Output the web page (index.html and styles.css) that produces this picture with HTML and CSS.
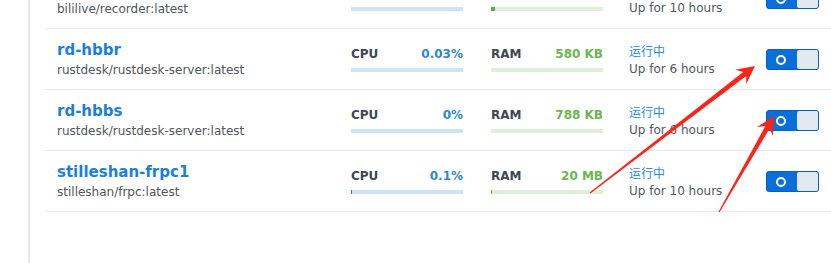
FILE: index.html
```html
<!DOCTYPE html>
<html lang="zh">
<head>
<meta charset="utf-8">
<title>Containers</title>
<link rel="stylesheet" href="styles.css">
</head>
<body>
<div class="page">
  <div class="panel">
    <div class="list">
      <div class="row">
        <div class="name">
          <div class="title">bililive-recorder</div>
          <div class="image">bililive/recorder:latest</div>
        </div>
        <div class="metric cpu">
          <div class="mhead"><span class="mlabel">CPU</span><span class="mval">0.2%</span></div>
          <div class="bar"><div class="fill" style="width:0px"></div></div>
        </div>
        <div class="metric ram">
          <div class="mhead"><span class="mlabel">RAM</span><span class="mval">120 MB</span></div>
          <div class="bar"><div class="fill" style="width:4px"></div></div>
        </div>
        <div class="status">
          <div class="state">运行中</div>
          <div class="uptime">Up for 10 hours</div>
        </div>
        <div class="toggle"><span class="ring"></span><span class="knob"></span></div>
      </div>
      <div class="row">
        <div class="name">
          <div class="title">rd-hbbr</div>
          <div class="image">rustdesk/rustdesk-server:latest</div>
        </div>
        <div class="metric cpu">
          <div class="mhead"><span class="mlabel">CPU</span><span class="mval">0.03%</span></div>
          <div class="bar"><div class="fill" style="width:0px"></div></div>
        </div>
        <div class="metric ram">
          <div class="mhead"><span class="mlabel">RAM</span><span class="mval">580 KB</span></div>
          <div class="bar"><div class="fill" style="width:0px"></div></div>
        </div>
        <div class="status">
          <div class="state">运行中</div>
          <div class="uptime">Up for 6 hours</div>
        </div>
        <div class="toggle"><span class="ring"></span><span class="knob"></span></div>
      </div>
      <div class="row">
        <div class="name">
          <div class="title">rd-hbbs</div>
          <div class="image">rustdesk/rustdesk-server:latest</div>
        </div>
        <div class="metric cpu">
          <div class="mhead"><span class="mlabel">CPU</span><span class="mval">0%</span></div>
          <div class="bar"><div class="fill" style="width:0px"></div></div>
        </div>
        <div class="metric ram">
          <div class="mhead"><span class="mlabel">RAM</span><span class="mval">788 KB</span></div>
          <div class="bar"><div class="fill" style="width:0px"></div></div>
        </div>
        <div class="status">
          <div class="state">运行中</div>
          <div class="uptime">Up for 6 hours</div>
        </div>
        <div class="toggle"><span class="ring"></span><span class="knob"></span></div>
      </div>
      <div class="row">
        <div class="name">
          <div class="title">stilleshan-frpc1</div>
          <div class="image">stilleshan/frpc:latest</div>
        </div>
        <div class="metric cpu">
          <div class="mhead"><span class="mlabel">CPU</span><span class="mval">0.1%</span></div>
          <div class="bar"><div class="fill" style="width:1px"></div></div>
        </div>
        <div class="metric ram">
          <div class="mhead"><span class="mlabel">RAM</span><span class="mval">20 MB</span></div>
          <div class="bar"><div class="fill" style="width:1px"></div></div>
        </div>
        <div class="status">
          <div class="state">运行中</div>
          <div class="uptime">Up for 10 hours</div>
        </div>
        <div class="toggle"><span class="ring"></span><span class="knob"></span></div>
      </div>
    </div>
  </div>
</div>
<svg class="marks" width="831" height="263" viewBox="0 0 831 263" aria-hidden="true">
  <polygon fill="#fb2418" points="590.4,193.5 746.2,75.9 746.2,84.0 755,66 735.2,69.8 743.2,71.9 589.6,192.5"/>
  <polygon fill="#fb2418" points="719.5,212.3 769.7,128.5 772.9,136.1 774,116 757.2,127.1 765.3,126.1 718.5,211.7"/>
</svg>
</body>
</html>
```
FILE: styles.css
```css
html, body {
  margin: 0;
  background: #ffffff;
}
body {
  width: 831px;
  height: 263px;
  overflow: hidden;
  position: relative;
  font-family: "DejaVu Sans", "Noto Sans CJK SC", sans-serif;
}
.page {
  display: flex;
  height: 263px;
  padding-left: 28px;
  box-sizing: border-box;
}
.panel {
  flex: 1;
  border-left: 2px solid #e8e8e8;
  padding-left: 15px;
  overflow: hidden;
}
.list {
  margin-top: -32px;
}
.row {
  display: flex;
  align-items: flex-start;
  height: 60px;
  border-bottom: 1px solid #e5e9ee;
  padding-left: 12px;
}
.name {
  width: 294px;
  flex: none;
  margin-top: 12px;
}
.title {
  font-size: 15px;
  font-weight: bold;
  line-height: 18px;
  color: #1b7fdb;
  white-space: nowrap;
}
.image {
  font-size: 12px;
  line-height: 16px;
  margin-top: 3px;
  color: #51565c;
  white-space: nowrap;
}
.metric {
  width: 112px;
  flex: none;
  margin-top: 17px;
}
.metric + .metric {
  margin-left: 28px;
}
.mhead {
  display: flex;
  justify-content: space-between;
  font-size: 12px;
  font-weight: bold;
  line-height: 16px;
}
.mlabel {
  color: #3e4752;
}
.cpu .mval {
  color: #2d88cd;
}
.ram .mval {
  color: #6ab650;
}
.bar {
  height: 4px;
  margin-top: 6px;
  display: flex;
}
.fill {
  height: 100%;
}
.cpu .bar {
  background: #cce4f7;
}
.cpu .fill {
  background: #2c7fc6;
}
.ram .bar {
  background: #dff0d9;
}
.ram .fill {
  background: #5cb149;
}
.status {
  width: 137px;
  flex: none;
  margin-left: 26px;
  margin-top: 15px;
  font-size: 12px;
  line-height: 16px;
  white-space: nowrap;
}
.state {
  color: #2b8be0;
}
.uptime {
  color: #52575d;
  margin-top: 1px;
}
.toggle {
  flex: none;
  display: flex;
  align-items: center;
  width: 53px;
  height: 21px;
  box-sizing: border-box;
  margin-top: 20px;
  border: 1px solid #0b5fba;
  border-radius: 3px;
  background: #0a6fd8;
}
.ring {
  width: 10px;
  height: 10px;
  box-sizing: border-box;
  border: 2px solid #ffffff;
  border-radius: 50%;
  margin-left: 9px;
}
.knob {
  margin-left: auto;
  width: 21px;
  height: 19px;
  background: #e3e9f1;
  border-radius: 2px;
}
.marks {
  position: absolute;
  top: 0;
  left: 0;
  pointer-events: none;
}
```
